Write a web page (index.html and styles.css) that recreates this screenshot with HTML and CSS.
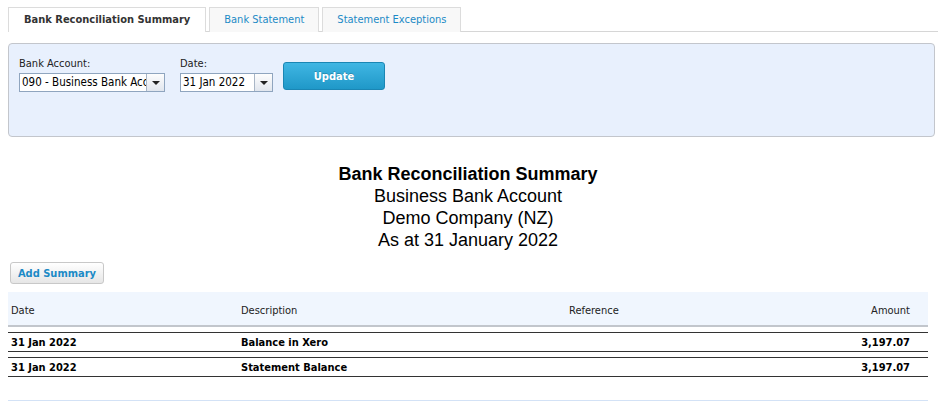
FILE: index.html
```html
<!DOCTYPE html>
<html>
<head>
<meta charset="utf-8">
<link rel="stylesheet" href="styles.css">
</head>
<body>
<div class="tabs">
  <div class="tab active">Bank Reconciliation Summary</div>
  <div class="tab">Bank Statement</div>
  <div class="tab">Statement Exceptions</div>
</div>

<div class="panel">
  <div class="field">
    <label class="lbl">Bank Account:</label>
    <div class="select wide">
      <span class="val">090 - Business Bank Account</span>
      <span class="arrow"></span>
    </div>
  </div>
  <div class="field">
    <label class="lbl">Date:</label>
    <div class="select narrow">
      <span class="val">31 Jan 2022</span>
      <span class="arrow"></span>
    </div>
  </div>
  <button class="update">Update</button>
</div>

<div class="report-title">
  <div class="t1">Bank Reconciliation Summary</div>
  <div>Business Bank Account</div>
  <div>Demo Company (NZ)</div>
  <div>As at 31 January 2022</div>
</div>

<button class="add">Add Summary</button>

<div class="table">
  <div class="row head">
    <div>Date</div><div>Description</div><div>Reference</div><div class="num">Amount</div>
  </div>
  <div class="row data">
    <div>31 Jan 2022</div><div>Balance in Xero</div><div></div><div class="num">3,197.07</div>
  </div>
  <div class="row data">
    <div>31 Jan 2022</div><div>Statement Balance</div><div></div><div class="num">3,197.07</div>
  </div>
</div>
<div class="foot"></div>
</body>
</html>
```

FILE: styles.css
```css
* { box-sizing: border-box; }
body {
  margin: 7px 3px 0 8px;
  font-family: "DejaVu Sans Condensed", "DejaVu Sans", sans-serif;
  font-size: 11px;
  color: #000;
  background: #fff;
}
.tabs {
  display: flex;
  gap: 3px;
  height: 25px;
  border-bottom: 1px solid #d6d6d6;
}
.tab {
  height: 25px;
  padding: 0 14px;
  line-height: 24px;
  border: 1px solid #dcdcdc;
  border-bottom: none;
  background: #f8f8f8;
  color: #1c8ac6;
}
.tab.active {
  background: #fff;
  color: #333;
  font-weight: bold;
  padding: 0 15px;
}
.panel {
  margin-top: 11px;
  margin-right: 3px;
  height: 94px;
  background: #e8f0fd;
  border: 1px solid #c3c6cc;
  border-radius: 4px;
  padding: 13px 10px 0;
  display: flex;
  align-items: flex-start;
  gap: 15px;
}
.field { display: flex; flex-direction: column; }
.lbl { line-height: 13px; margin-bottom: 3px; color: #222; }
.select {
  display: flex;
  height: 19px;
  border: 1px solid #8fa5bf;
  background: #fff;
  font-size: 11.5px;
}
.select .val {
  flex: 1;
  overflow: hidden;
  white-space: nowrap;
  padding-left: 2px;
  line-height: 17px;
}
.select .arrow {
  width: 18px;
  border-left: 1px solid #a9b6c6;
  background: linear-gradient(#fdfdfd, #e1e6ee);
  position: relative;
}
.select .arrow::after {
  content: "";
  position: absolute;
  left: 5px;
  top: 7px;
  border-left: 4px solid transparent;
  border-right: 4px solid transparent;
  border-top: 4px solid #222;
}
.wide { width: 146px; }
.narrow { width: 93px; }
.update {
  margin-top: 5px;
  margin-left: -5px;
  width: 102px;
  height: 28px;
  border: 1px solid #1a86b4;
  border-radius: 3px;
  background: linear-gradient(#40b6e3, #1f98c8);
  color: #fff;
  font-family: inherit;
  font-size: 11px;
  font-weight: bold;
  text-shadow: 0 -1px 0 rgba(0,0,0,0.2);
}
.report-title {
  margin-top: 26px;
  text-align: center;
  font-family: "Liberation Sans", Arial, sans-serif;
  font-size: 18px;
  line-height: 22px;
  padding-right: 10px;
}
.report-title .t1 { font-weight: bold; }
.add {
  display: block;
  margin: 11px 0 0 2px;
  height: 22px;
  width: 94px;
  border: 1px solid #c8c8c8;
  border-radius: 3px;
  background: linear-gradient(#ffffff, #e6e6e6);
  color: #1c8ac6;
  font-family: inherit;
  font-size: 11px;
  font-weight: bold;
  padding: 0;
}
.table { margin-top: 8px; width: 920px; }
.row {
  display: grid;
  grid-template-columns: 230px 328px 1fr 120px;
  padding: 0 18px 0 3px;
}
.row .num { text-align: right; }
.head {
  height: 35px;
  background: #f0f6fe;
  border-bottom: 2px solid #c2c6cc;
  line-height: 33px;
  padding-top: 2px;
  color: #222;
}
.data {
  margin-top: 5px;
  height: 20px;
  border-top: 1px solid #333;
  border-bottom: 1px solid #333;
  font-weight: bold;
  line-height: 18px;
  padding-top: 1px;
}
.foot {
  margin-top: 23px;
  width: 920px;
  border-top: 1px solid #d3e2f6;
}
```
